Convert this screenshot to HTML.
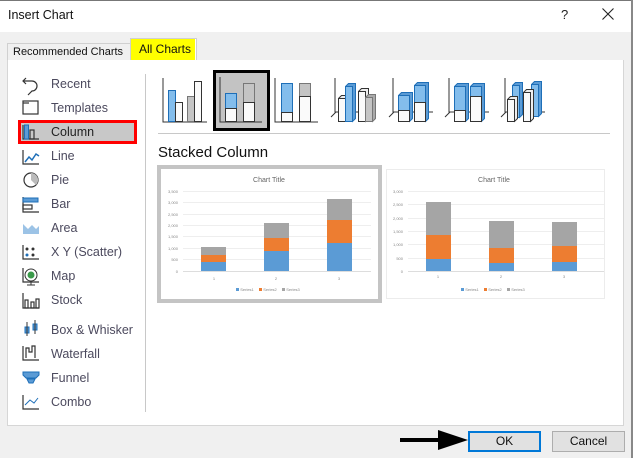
<!DOCTYPE html>
<html><head><meta charset="utf-8"><style>
*{margin:0;padding:0;box-sizing:border-box}
body{width:633px;height:458px;overflow:hidden;background:#f0f0f0;font-family:"Liberation Sans",sans-serif;position:relative}
.a{position:absolute}
.it{position:absolute;left:51px;font-size:12.5px;color:#4c4a5e}
</style></head><body>
<div class="a" style="left:0;top:0;width:633px;height:1px;background:#777"></div>
<div class="a" style="left:631px;top:0;width:2px;height:458px;background:#888"></div>
<div class="a" style="left:0;top:1px;width:631px;height:31px;background:#fff"></div>
<div class="a" style="left:8px;top:8px;font-size:12.5px;color:#111">Insert Chart</div>
<div class="a" style="left:561px;top:7px;font-size:13px;color:#222">?</div>
<svg class="a" style="left:602px;top:8px" width="12" height="12"><path d="M0.5 0.5 L11.5 11.5 M11.5 0.5 L0.5 11.5" stroke="#222" stroke-width="1.1"/></svg>

<!-- tabs -->
<div class="a" style="left:7px;top:43px;width:124px;height:18px;border:1px solid #d0d0d0;border-bottom:none;background:#f0f0f0"></div>
<div class="a" style="left:13px;top:46px;font-size:11px;color:#111;white-space:nowrap">Recommended Charts</div>
<div class="a" style="left:130px;top:38px;width:67px;height:23px;border:1px solid #d0d0d0;border-bottom:none;background:#fff"></div>
<div class="a" style="left:131px;top:39px;width:64px;height:22px;background:#ffff00"></div>
<div class="a" style="left:139px;top:42px;font-size:12px;color:#111">All Charts</div>

<!-- panel -->
<div class="a" style="left:7px;top:60px;width:617px;height:366px;background:#fff;border:1px solid #d6d6d6;border-top:none"></div>
<div class="a" style="left:145px;top:74px;width:1px;height:338px;background:#c8c8c8"></div>

<!-- left list -->
<div class="a" style="left:18px;top:120px;width:119px;height:24px;background:#c8c8c8;border:3px solid #ff0000"></div>
<svg class="a" style="left:0;top:60px" width="145" height="360" viewBox="0 60 145 360">
<g fill="none" stroke="#333" stroke-width="1.2">
<path d="M26 78 l-3 3 3 3 M23 81 h9 a5 5 0 0 1 0 10 l-4 4"/>
<rect x="23" y="101" width="15" height="13"/><path d="M23 103 h6"/>
<path d="M23 125 v14 h16"/><rect x="30" y="130" width="4" height="9"/>
<path d="M23 150 v14 h16"/>
<circle cx="31" cy="180" r="7"/>
<path d="M23 197 v15 h16"/><rect x="23" y="205" width="9" height="4"/>
<path d="M23 245 v14 h16"/>
<path d="M23 268 v14 h16"/>
<path d="M23 293 v15 h16"/><rect x="25" y="300" width="3" height="8"/><rect x="31" y="302" width="3" height="6"/><rect x="36" y="299" width="3" height="9"/>
<path d="M23 346 v14 h16"/><path d="M26 358 v-10 h3 v4 h3 v-6 h3 v12"/>
<path d="M23 395 v14 h16"/>
</g>
<rect x="24.5" y="125" width="4" height="14" fill="#5b9bd5" stroke="#1e6fb8"/>
<path d="M25 162 l4 -5 3 3 4 -6 3 2" stroke="#1e6fb8" fill="none" stroke-width="1.5"/>
<path d="M31 180 v-7 a7 7 0 0 1 5 12z" fill="#bbb"/>
<rect x="23" y="198" width="15" height="4" fill="#5b9bd5" stroke="#1e6fb8"/>
<path d="M23 224 l5 5 4 -4 4 4 3 -3 v8 h-16z" fill="#9cc3e6"/>
<g fill="#333"><circle cx="27" cy="249" r="1.5"/><circle cx="33" cy="249" r="1.5"/><circle cx="33" cy="255" r="1.5"/><circle cx="27" cy="255" r="1.5" fill="#1e6fb8"/></g>
<circle cx="31" cy="275" r="6" fill="#fff" stroke="#333"/><circle cx="31" cy="275" r="3.5" fill="#3a9a4a"/><path d="M31 281 v4 M27 285 h8" stroke="#333"/>
<g fill="#5b9bd5" stroke="#1e6fb8"><rect x="25" y="327" width="4" height="6"/><rect x="33" y="324" width="4" height="6"/></g>
<path d="M27 322 v14 M35 320 v14" stroke="#333"/>
<path d="M23 372 h16 v3 l-3 3 h-10 l-3 -3z M27 379 h8 l-2 4 h-4z" fill="#5b9bd5" stroke="#1e6fb8"/>
<path d="M25 405 l5 -5 4 3 4 -5" stroke="#1e6fb8" fill="none"/>
</svg>
<div class="it" style="top:77px">Recent</div>
<div class="it" style="top:101px">Templates</div>
<div class="it" style="top:125px;color:#222">Column</div>
<div class="it" style="top:149px">Line</div>
<div class="it" style="top:173px">Pie</div>
<div class="it" style="top:197px">Bar</div>
<div class="it" style="top:221px">Area</div>
<div class="it" style="top:245px">X Y (Scatter)</div>
<div class="it" style="top:269px">Map</div>
<div class="it" style="top:293px">Stock</div>
<div class="it" style="top:323px">Box &amp; Whisker</div>
<div class="it" style="top:347px">Waterfall</div>
<div class="it" style="top:371px">Funnel</div>
<div class="it" style="top:395px">Combo</div>

<!-- right side -->
<svg class="a" style="left:0;top:0" width="633" height="458">
<rect x="214.5" y="71.5" width="54" height="58" fill="#c3c3c3" stroke="#000" stroke-width="3"/>
<g stroke="#333" stroke-width="1" fill="none">
<path d="M163 78 v44 h44 M220 77 v45 h42 M275 78 v44 h43"/>
</g>
<g stroke-width="1">
<rect x="168.5" y="90.5" width="7" height="31" fill="#83bdec" stroke="#1e6fb8"/>
<rect x="175.5" y="102.5" width="7" height="19" fill="#fafafa" stroke="#333"/>
<rect x="187.5" y="96.5" width="7" height="25" fill="#c4c4c4" stroke="#777"/>
<rect x="194.5" y="81.5" width="7" height="40" fill="#fafafa" stroke="#333"/>
<rect x="225.5" y="93.5" width="11" height="15" fill="#83bdec" stroke="#1e6fb8"/>
<rect x="225.5" y="108.5" width="11" height="13" fill="#fafafa" stroke="#333"/>
<rect x="243.5" y="83.5" width="11" height="19" fill="#c4c4c4" stroke="#777"/>
<rect x="243.5" y="102.5" width="11" height="19" fill="#fafafa" stroke="#333"/>
<rect x="281.5" y="83.5" width="11" height="29" fill="#83bdec" stroke="#1e6fb8"/>
<rect x="281.5" y="112.5" width="11" height="9" fill="#fafafa" stroke="#333"/>
<rect x="299.5" y="83.5" width="11" height="13" fill="#c4c4c4" stroke="#777"/>
<rect x="299.5" y="96.5" width="11" height="25" fill="#fafafa" stroke="#333"/>
</g>
<g stroke="#333" fill="none">
<path d="M335 78 v34 h40 M331 117 l5 -5"/><path d="M393 78 v34 h40 M389 117 l5 -5"/>
<path d="M449 78 v34 h40 M445 117 l5 -5"/><path d="M505 78 v34 h40 M501 117 l5 -5"/>
</g>
<g stroke-width="1">
<path d="M338.5 98.5 l3 -3 h7 v26 l-3 0z" fill="#eee" stroke="#333"/><rect x="338.5" y="98.5" width="7" height="23" fill="#fafafa" stroke="#333"/>
<path d="M345.5 86.5 l3 -3 h7 v35 l-3 3z" fill="#5b9bd5" stroke="#1e6fb8"/><rect x="345.5" y="86.5" width="7" height="35" fill="#83bdec" stroke="#1e6fb8"/>
<path d="M358.5 91.5 l3 -3 h7 v30 l-3 3z" fill="#eee" stroke="#333"/><rect x="358.5" y="91.5" width="7" height="30" fill="#fafafa" stroke="#333"/>
<path d="M365.5 97.5 l3 -3 h7 v24 l-3 3z" fill="#aaa" stroke="#777"/><rect x="365.5" y="97.5" width="7" height="24" fill="#c4c4c4" stroke="#777"/>
<path d="M398.5 95.5 l3 -3 h11 v26 l-3 3z" fill="#5b9bd5" stroke="#1e6fb8"/><rect x="398.5" y="95.5" width="11" height="15" fill="#83bdec" stroke="#1e6fb8"/><rect x="398.5" y="110.5" width="11" height="11" fill="#fafafa" stroke="#333"/>
<path d="M414.5 85.5 l3 -3 h11 v36 l-3 3z" fill="#5b9bd5" stroke="#1e6fb8"/><rect x="414.5" y="85.5" width="11" height="17" fill="#83bdec" stroke="#1e6fb8"/><rect x="414.5" y="102.5" width="11" height="19" fill="#fafafa" stroke="#333"/>
<path d="M454.5 86.5 l3 -3 h11 v35 l-3 3z" fill="#5b9bd5" stroke="#1e6fb8"/><rect x="454.5" y="86.5" width="11" height="24" fill="#83bdec" stroke="#1e6fb8"/><rect x="454.5" y="110.5" width="11" height="11" fill="#fafafa" stroke="#333"/>
<path d="M470.5 86.5 l3 -3 h11 v35 l-3 3z" fill="#5b9bd5" stroke="#1e6fb8"/><rect x="470.5" y="86.5" width="11" height="10" fill="#83bdec" stroke="#1e6fb8"/><rect x="470.5" y="96.5" width="11" height="25" fill="#fafafa" stroke="#333"/>
<path d="M512.5 85.5 l3 -3 h7 v32 l-3 3z" fill="#5b9bd5" stroke="#1e6fb8"/><rect x="512.5" y="85.5" width="7" height="32" fill="#83bdec" stroke="#1e6fb8"/>
<path d="M507.5 99.5 l3 -3 h7 v22 l-3 3z" fill="#eee" stroke="#333"/><rect x="507.5" y="99.5" width="7" height="22" fill="#fafafa" stroke="#333"/>
<path d="M531.5 84.5 l3 -3 h7 v32 l-3 3z" fill="#5b9bd5" stroke="#1e6fb8"/><rect x="531.5" y="84.5" width="7" height="32" fill="#83bdec" stroke="#1e6fb8"/>
<path d="M523.5 92.5 l3 -3 h7 v29 l-3 3z" fill="#eee" stroke="#333"/><rect x="523.5" y="92.5" width="7" height="29" fill="#fafafa" stroke="#333"/>
</g>
<rect x="158" y="133" width="452" height="1" fill="#c8c8c8"/>
<text x="158" y="157" font-family="Liberation Sans" font-size="15" fill="#111">Stacked Column</text>

<rect x="159" y="167" width="221" height="134" fill="#fff" stroke="#c4c4c4" stroke-width="4"/>
<text x="269" y="182" text-anchor="middle" font-family="Liberation Sans" font-size="7" fill="#666">Chart Title</text>
<g fill="#eee">
<rect x="183" y="191" width="188" height="1"/><rect x="183" y="202" width="188" height="1"/><rect x="183" y="214" width="188" height="1"/><rect x="183" y="225" width="188" height="1"/><rect x="183" y="236" width="188" height="1"/><rect x="183" y="248" width="188" height="1"/><rect x="183" y="259" width="188" height="1"/><rect x="183" y="271" width="188" height="1" fill="#ddd"/>
</g>
<g font-family="Liberation Sans" font-size="4" fill="#888" text-anchor="end">
<text x="178" y="193">3,500</text><text x="178" y="204">3,000</text><text x="178" y="216">2,500</text><text x="178" y="227">2,000</text><text x="178" y="238">1,500</text><text x="178" y="250">1,000</text><text x="178" y="261">500</text><text x="178" y="273">0</text>
</g>
<rect x="201" y="247" width="25" height="8" fill="#a5a5a5"/><rect x="201" y="255" width="25" height="7" fill="#ed7d31"/><rect x="201" y="262" width="25" height="9" fill="#5b9bd5"/>
<rect x="264" y="223" width="25" height="15" fill="#a5a5a5"/><rect x="264" y="238" width="25" height="13" fill="#ed7d31"/><rect x="264" y="251" width="25" height="20" fill="#5b9bd5"/>
<rect x="327" y="199" width="25" height="21" fill="#a5a5a5"/><rect x="327" y="220" width="25" height="23" fill="#ed7d31"/><rect x="327" y="243" width="25" height="28" fill="#5b9bd5"/>
<g font-family="Liberation Sans" font-size="4" fill="#888" text-anchor="middle"><text x="214" y="280">1</text><text x="276" y="280">2</text><text x="339" y="280">3</text>
<rect x="236" y="288" width="3" height="3" fill="#5b9bd5"/><text x="247" y="291">Series1</text><rect x="259" y="288" width="3" height="3" fill="#ed7d31"/><text x="270" y="291">Series2</text><rect x="282" y="288" width="3" height="3" fill="#a5a5a5"/><text x="293" y="291">Series3</text></g>

<rect x="386.5" y="169.5" width="218" height="129" fill="#fff" stroke="#ececec"/>
<text x="494" y="182" text-anchor="middle" font-family="Liberation Sans" font-size="7" fill="#666">Chart Title</text>
<g fill="#eee">
<rect x="408" y="191" width="196" height="1"/><rect x="408" y="204" width="196" height="1"/><rect x="408" y="218" width="196" height="1"/><rect x="408" y="231" width="196" height="1"/><rect x="408" y="244" width="196" height="1"/><rect x="408" y="258" width="196" height="1"/><rect x="408" y="271" width="196" height="1" fill="#ddd"/>
</g>
<g font-family="Liberation Sans" font-size="4" fill="#888" text-anchor="end">
<text x="403" y="193">3,000</text><text x="403" y="206">2,500</text><text x="403" y="220">2,000</text><text x="403" y="233">1,500</text><text x="403" y="246">1,000</text><text x="403" y="260">500</text><text x="403" y="273">0</text>
</g>
<rect x="426" y="202" width="25" height="33" fill="#a5a5a5"/><rect x="426" y="235" width="25" height="24" fill="#ed7d31"/><rect x="426" y="259" width="25" height="12" fill="#5b9bd5"/>
<rect x="489" y="221" width="25" height="27" fill="#a5a5a5"/><rect x="489" y="248" width="25" height="15" fill="#ed7d31"/><rect x="489" y="263" width="25" height="8" fill="#5b9bd5"/>
<rect x="552" y="222" width="25" height="24" fill="#a5a5a5"/><rect x="552" y="246" width="25" height="16" fill="#ed7d31"/><rect x="552" y="262" width="25" height="9" fill="#5b9bd5"/>
<g font-family="Liberation Sans" font-size="4" fill="#888" text-anchor="middle"><text x="438" y="278">1</text><text x="501" y="278">2</text><text x="564" y="278">3</text>
<rect x="461" y="288" width="3" height="3" fill="#5b9bd5"/><text x="472" y="291">Series1</text><rect x="484" y="288" width="3" height="3" fill="#ed7d31"/><text x="495" y="291">Series2</text><rect x="507" y="288" width="3" height="3" fill="#a5a5a5"/><text x="518" y="291">Series3</text></g>

<rect x="400" y="438" width="45" height="4" fill="#000"/>
<path d="M438 430 L468 440 L438 450 Z" fill="#000"/>
</svg>

<div class="a" style="left:468px;top:431px;width:73px;height:21px;background:#e1e1e1;border:2px solid #0078d7;font-size:12px;text-align:center;line-height:17px;color:#111">OK</div>
<div class="a" style="left:552px;top:431px;width:73px;height:21px;background:#e1e1e1;border:1px solid #adadad;font-size:12px;text-align:center;line-height:19px;color:#111">Cancel</div>
</body></html>
